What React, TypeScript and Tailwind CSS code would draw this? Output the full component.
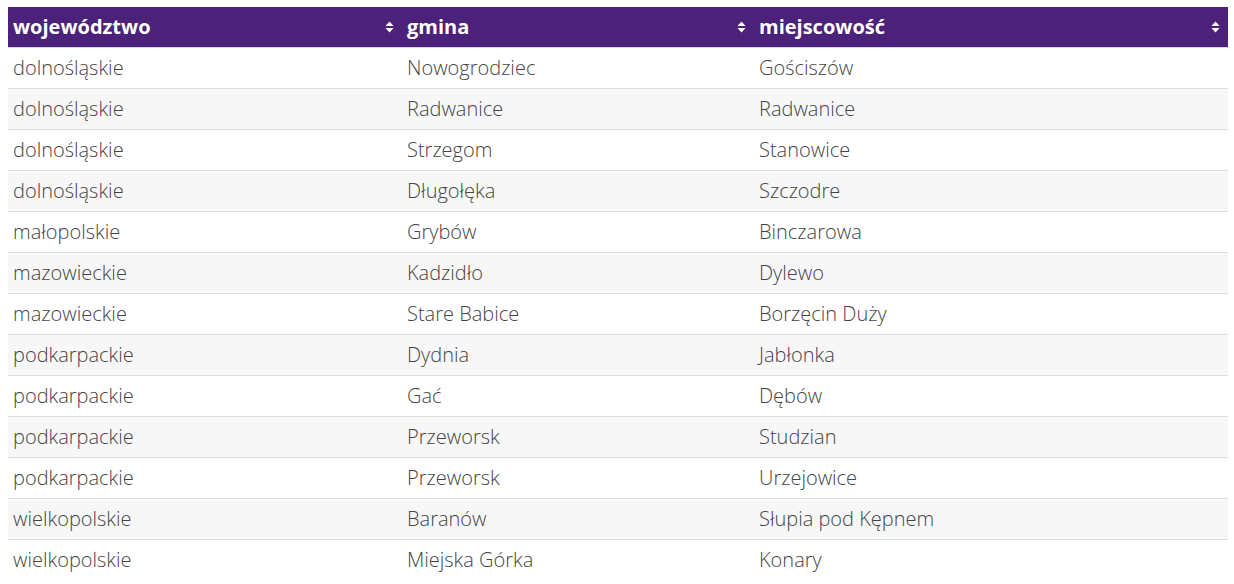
import React from 'react';

const rows: [string, string, string][] = [
    ['dolnośląskie', 'Nowogrodziec', 'Gościszów'],
    ['dolnośląskie', 'Radwanice', 'Radwanice'],
    ['dolnośląskie', 'Strzegom', 'Stanowice'],
    ['dolnośląskie', 'Długołęka', 'Szczodre'],
    ['małopolskie', 'Grybów', 'Binczarowa'],
    ['mazowieckie', 'Kadzidło', 'Dylewo'],
    ['mazowieckie', 'Stare Babice', 'Borzęcin Duży'],
    ['podkarpackie', 'Dydnia', 'Jabłonka'],
    ['podkarpackie', 'Gać', 'Dębów'],
    ['podkarpackie', 'Przeworsk', 'Studzian'],
    ['podkarpackie', 'Przeworsk', 'Urzejowice'],
    ['wielkopolskie', 'Baranów', 'Słupia pod Kępnem'],
    ['wielkopolskie', 'Miejska Górka', 'Konary'],
];

const SortIcon = () => (
    <svg width="9" height="12" viewBox="0 0 9 12" fill="white">
        <polygon points="4.5,0.5 8.5,5 0.5,5" />
        <polygon points="0.5,7 8.5,7 4.5,11.5" />
    </svg>
);

const HeaderCell = ({ label, width }: { label: string; width: string }) => (
    <th className={`${width} h-10 pl-[5px] pr-[8px] text-left font-bold text-[20px] text-white`}>
        <div className="flex items-center justify-between">
            <span>{label}</span>
            <SortIcon />
        </div>
    </th>
);

export default function App() {
    return (
        <div className="w-[1234px] h-[584px] bg-white overflow-hidden pt-[7px] px-[8px]" style={{ fontFamily: '"Open Sans", sans-serif' }}>
            <table className="w-[1220px] table-fixed border-collapse">
                <thead>
                    <tr className="bg-[#4b2179] border-b border-[#d9cfe6]">
                        <HeaderCell label="województwo" width="w-[394px]" />
                        <HeaderCell label="gmina" width="w-[352px]" />
                        <HeaderCell label="miejscowość" width="w-[474px]" />
                    </tr>
                </thead>
                <tbody>
                    {rows.map((r, i) => (
                        <tr key={i} className={`h-[41px] border-[#dddddd] ${i < rows.length - 1 ? 'border-b' : ''} ${i % 2 === 1 ? 'bg-[#f7f7f7]' : 'bg-white'}`}>
                            {r.map((c, j) => (
                                <td key={j} className="pl-[5px] text-[20px] font-light text-[#444444]">{c}</td>
                            ))}
                        </tr>
                    ))}
                </tbody>
            </table>
        </div>
    );
}
